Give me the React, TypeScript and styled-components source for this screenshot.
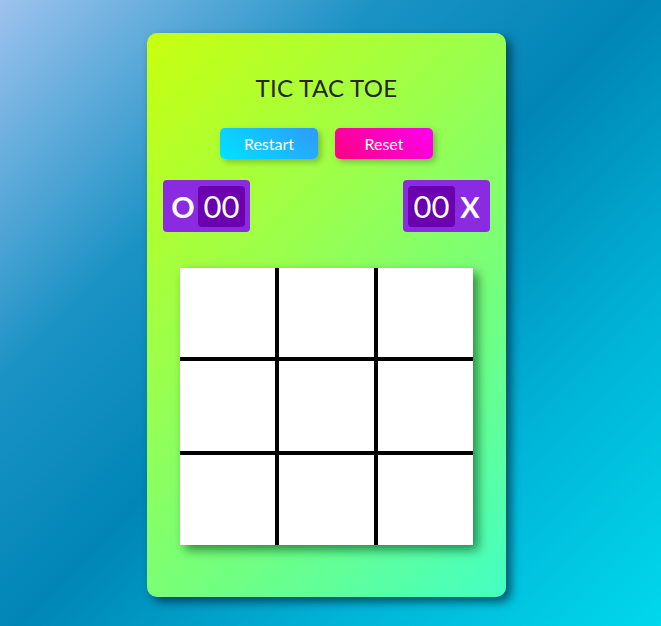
import React, { useState } from "react";
import styled, { createGlobalStyle } from "styled-components";

const GlobalStyle = createGlobalStyle`
  html, body {
    margin: 0;
    padding: 0;
    height: 100%;
  }
  body {
    font-family: "Lato", "Open Sans", sans-serif;
  }
`;

const StyledPage = styled.div`
  height: 626px;
  box-sizing: border-box;
  padding: 33px 8px 29px 0;
  display: flex;
  justify-content: center;
  background: linear-gradient(135deg, #9ec2ee 0%, #1a92c4 30%, #0086b6 50%, #00b4d8 75%, #00d8ec 100%);
`;

const StyledCard = styled.div`
  width: 359px;
  height: 564px;
  box-sizing: border-box;
  padding: 0 16px;
  border-radius: 10px;
  background: linear-gradient(135deg, #c8ff0e 0%, #98ff50 40%, #6eff86 70%, #44ffc4 100%);
  box-shadow: 5px 5px 10px rgba(0, 40, 60, 0.7);
  display: flex;
  flex-direction: column;
  align-items: center;
`;

const StyledTitle = styled.h1`
  margin: 39px 0 0;
  height: 32px;
  line-height: 32px;
  font-size: 24px;
  font-weight: 400;
  letter-spacing: 0.3px;
  color: #262626;
`;

const StyledButtonRow = styled.div`
  margin-top: 24px;
  display: flex;
  gap: 17px;
`;

const StyledButton = styled.button<{ $from: string; $to: string }>`
  width: 98px;
  height: 31px;
  border: none;
  border-radius: 5px;
  background: linear-gradient(45deg, ${(p) => p.$from}, ${(p) => p.$to});
  color: #fff;
  font-family: inherit;
  font-size: 16px;
  cursor: pointer;
  box-shadow: 3px 3px 6px rgba(0, 0, 0, 0.25);
`;

const StyledScoreRow = styled.div`
  align-self: stretch;
  margin-top: 21px;
  display: flex;
  justify-content: space-between;
`;

const StyledScore = styled.div<{ $reverse?: boolean }>`
  width: 87px;
  height: 52px;
  box-sizing: border-box;
  padding: 5px;
  border-radius: 4px;
  background: #8a2be2;
  display: flex;
  flex-direction: ${(p) => (p.$reverse ? "row-reverse" : "row")};
  align-items: center;
  justify-content: space-between;
`;

const StyledMark = styled.span`
  width: 30px;
  text-align: center;
  color: #fff;
  font-size: 29px;
  font-weight: 700;
  line-height: 1;
`;

const StyledCount = styled.span`
  width: 47px;
  height: 41px;
  border-radius: 4px;
  background: #6a00ae;
  color: #fff;
  font-size: 31px;
  font-weight: 400;
  display: flex;
  align-items: center;
  justify-content: center;
`;

const StyledBoard = styled.div`
  margin-top: 36px;
  width: 293px;
  height: 277px;
  display: grid;
  grid-template-columns: repeat(3, 1fr);
  grid-template-rows: 89fr 90fr 90fr;
  gap: 4px;
  background: #000;
  box-shadow: 5px 5px 10px rgba(0, 60, 20, 0.6);
`;

const StyledCell = styled.div`
  background: #fff;
  cursor: pointer;
`;

const App = () => {
  const [cells] = useState<string[]>(Array(9).fill(""));
  const [scoreO] = useState(0);
  const [scoreX] = useState(0);
  const pad = (n: number) => String(n).padStart(2, "0");

  return (
    <>
      <GlobalStyle />
      <StyledPage>
        <StyledCard>
          <StyledTitle>TIC TAC TOE</StyledTitle>
          <StyledButtonRow>
            <StyledButton $from="#00e2ff" $to="#2f9aff">Restart</StyledButton>
            <StyledButton $from="#ff0084" $to="#ff00f0">Reset</StyledButton>
          </StyledButtonRow>
          <StyledScoreRow>
            <StyledScore>
              <StyledMark>O</StyledMark>
              <StyledCount>{pad(scoreO)}</StyledCount>
            </StyledScore>
            <StyledScore $reverse>
              <StyledMark>X</StyledMark>
              <StyledCount>{pad(scoreX)}</StyledCount>
            </StyledScore>
          </StyledScoreRow>
          <StyledBoard>
            {cells.map((c, i) => (
              <StyledCell key={i}>{c}</StyledCell>
            ))}
          </StyledBoard>
        </StyledCard>
      </StyledPage>
    </>
  );
};

export default App;
